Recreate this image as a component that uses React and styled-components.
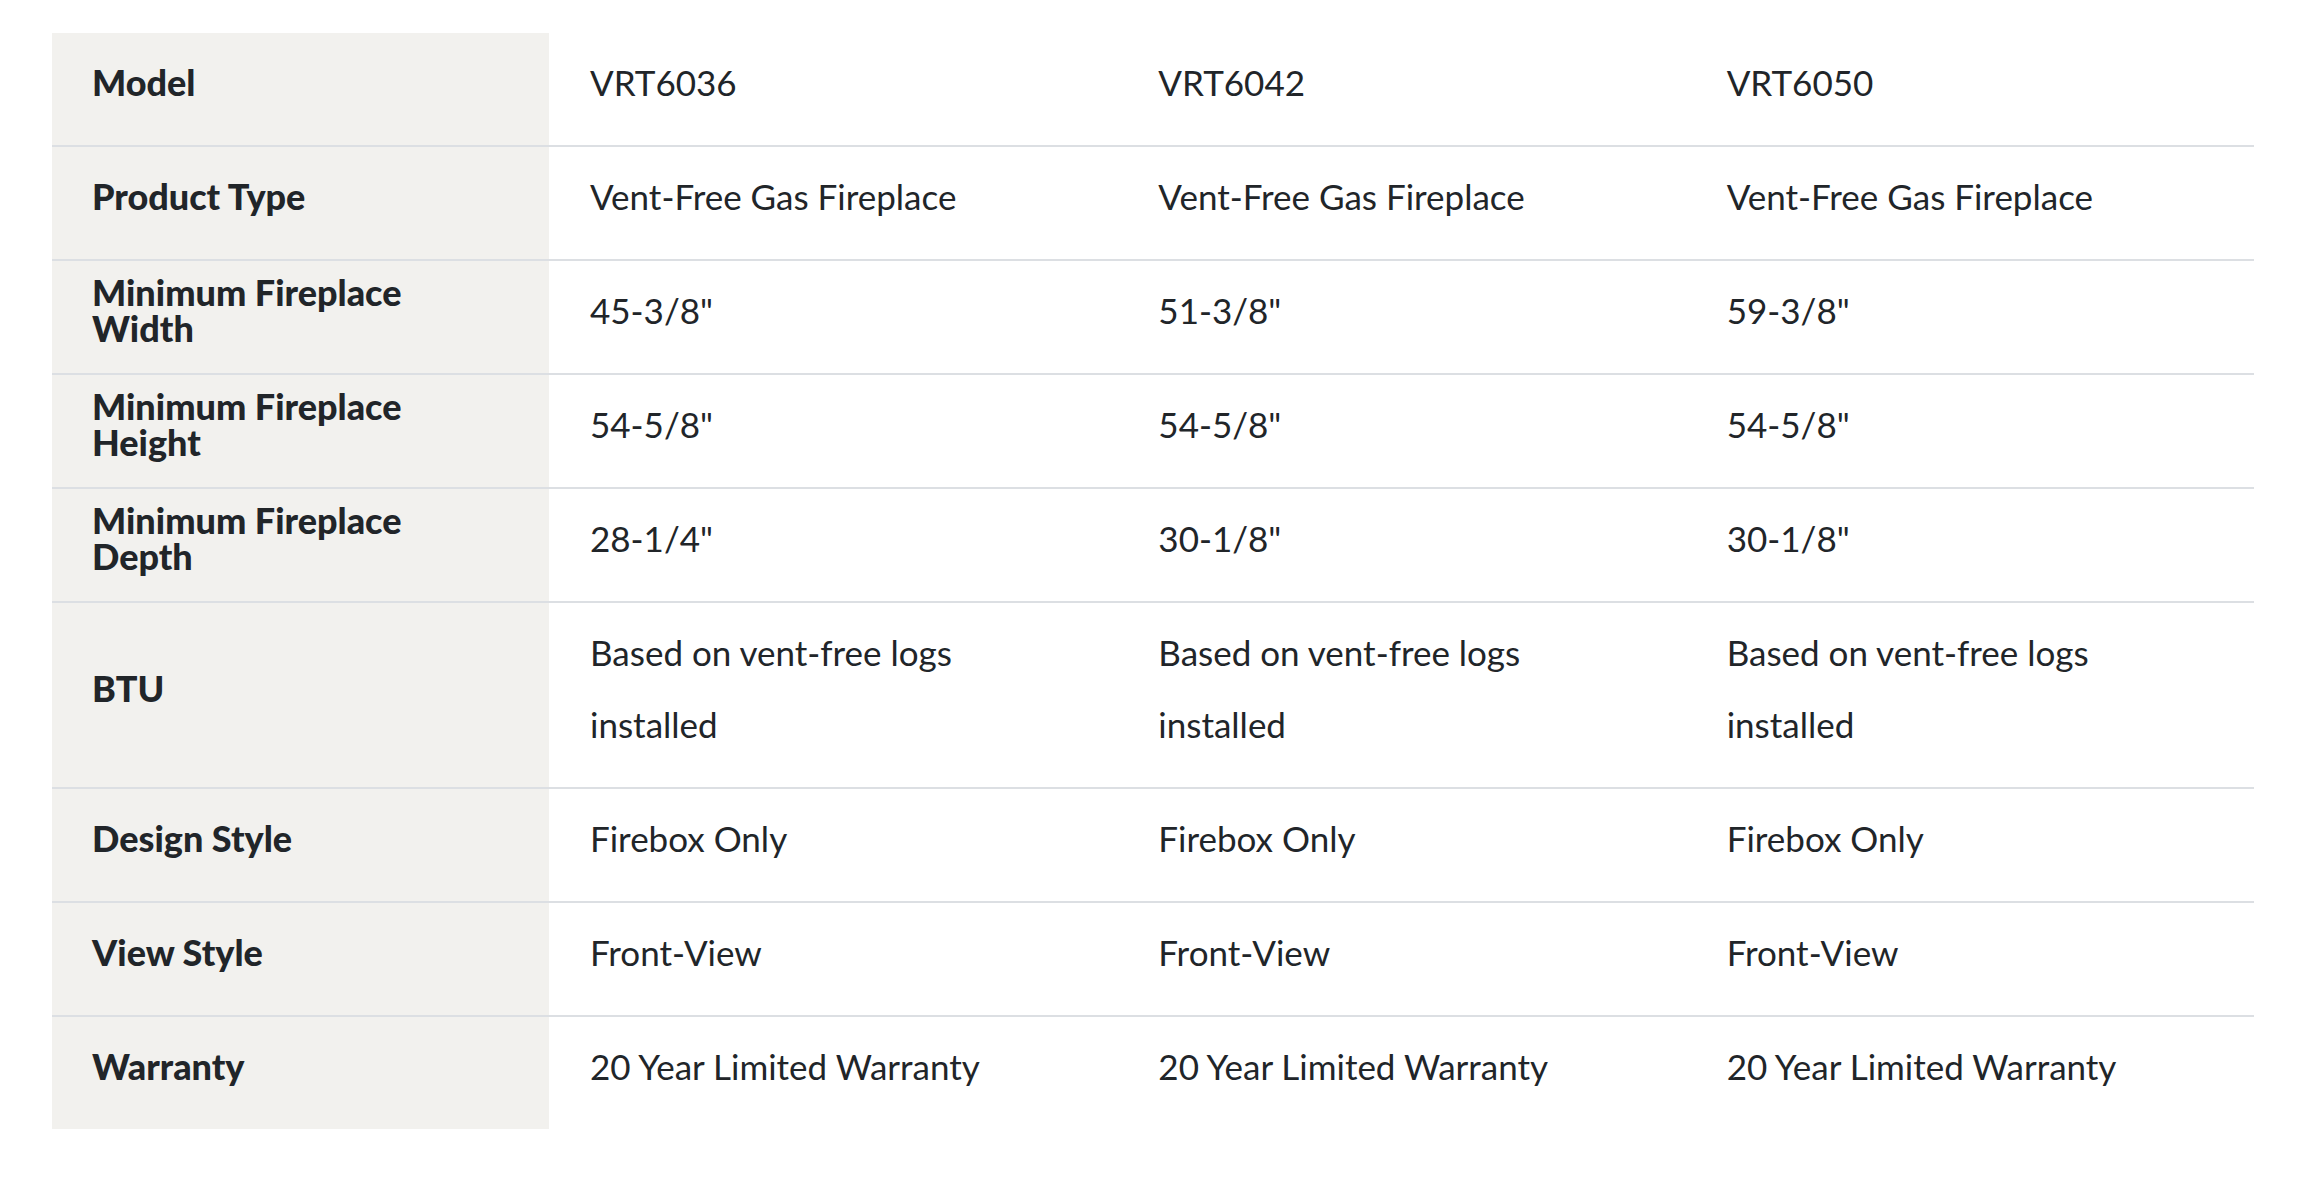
import React from "react";
import styled, { createGlobalStyle } from "styled-components";

const GlobalStyle = createGlobalStyle`
  body {
    margin: 0;
    background: #ffffff;
    font-family: Lato, "Noto Sans", sans-serif;
  }
`;

const Page = styled.div`
  padding: 33px 46px 40px 52px;
`;

const Table = styled.table`
  width: 2202px;
  border-collapse: collapse;
  table-layout: fixed;
  color: #212529;
`;

const Row = styled.tr`
  border-top: ${(p) => (p.first ? "none" : "2px solid #dcdfe3")};
`;

const HeadCell = styled.th`
  width: 497px;
  box-sizing: border-box;
  background: #f2f1ee;
  padding: 13px 56px 27px 40px;
  text-align: left;
  vertical-align: middle;
  font-weight: 900;
  font-size: 36px;
  line-height: 36px;
`;

const Cell = styled.td`
  padding: 13px 60px 27px 41px;
  vertical-align: middle;
  font-size: 35px;
  line-height: 72px;
  font-weight: 400;
`;

const rows = [
  ["Model", "VRT6036", "VRT6042", "VRT6050"],
  ["Product Type", "Vent-Free Gas Fireplace", "Vent-Free Gas Fireplace", "Vent-Free Gas Fireplace"],
  ["Minimum Fireplace Width", '45-3/8"', '51-3/8"', '59-3/8"'],
  ["Minimum Fireplace Height", '54-5/8"', '54-5/8"', '54-5/8"'],
  ["Minimum Fireplace Depth", '28-1/4"', '30-1/8"', '30-1/8"'],
  ["BTU", "Based on vent-free logs installed", "Based on vent-free logs installed", "Based on vent-free logs installed"],
  ["Design Style", "Firebox Only", "Firebox Only", "Firebox Only"],
  ["View Style", "Front-View", "Front-View", "Front-View"],
  ["Warranty", "20 Year Limited Warranty", "20 Year Limited Warranty", "20 Year Limited Warranty"],
];

const SpecTable = () => {
  return (
    <Table>
      <tbody>
        {rows.map(([label, ...values], i) => (
          <Row key={label} first={i === 0}>
            <HeadCell>{label}</HeadCell>
            {values.map((v, j) => (
              <Cell key={j}>{v}</Cell>
            ))}
          </Row>
        ))}
      </tbody>
    </Table>
  );
};

const App = () => {
  return (
    <>
      <GlobalStyle />
      <Page>
        <SpecTable />
      </Page>
    </>
  );
};

export default App;
